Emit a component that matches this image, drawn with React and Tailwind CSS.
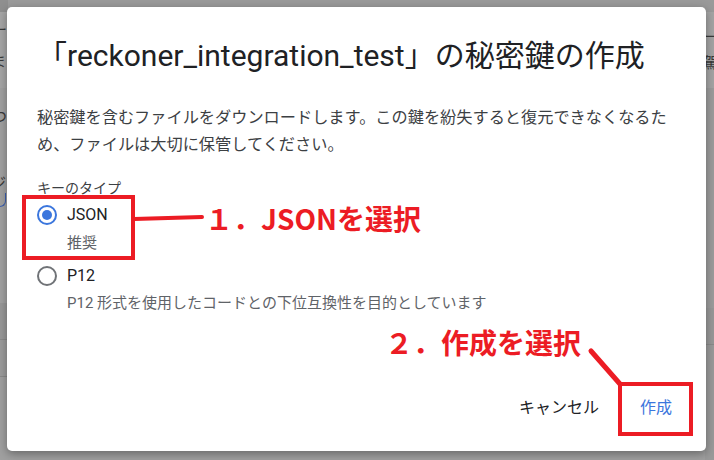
import React from 'react';

const font = "font-['Roboto','Noto_Sans_CJK_JP',sans-serif]";

function Radio({ checked }) {
  if (checked) {
    return (
      <span className="flex h-[20px] w-[20px] shrink-0 items-center justify-center rounded-full border-2 border-[#3b76dd]">
        <span className="h-[10px] w-[10px] rounded-full bg-[#3b76dd]" />
      </span>
    );
  }
  return <span className="h-[20px] w-[20px] shrink-0 rounded-full border-2 border-[#707377]" />;
}

export default function App() {
  return (
    <div className={`relative h-[460px] w-[714px] overflow-hidden bg-[#9e9e9e] ${font}`}>
      {/* dimmed page underneath */}
      <div className="flex h-full w-full">
        <div className="flex w-[8px] flex-col overflow-hidden text-[15px] leading-[20px] text-[#3a3a3a]">
          <div className="h-[12px] bg-[#8f8f8f]" />
          <div className="flex h-[76px] flex-col bg-[#a6a6a6] pt-[8px]">
            <span className="-ml-[8px]">ー</span>
            <span className="-ml-[9px] mt-[12px]">ま</span>
          </div>
          <div className="flex h-[215px] flex-col bg-[#a1a1a1] pt-[19px]">
            <span className="-ml-[8px]">つ</span>
            <span className="-ml-[9px] mt-[46px]">ジ</span>
            <div className="-ml-[8px] h-[14px] w-[14px] rounded-b-[6px] border-b border-r border-[#3b5fb0]" />
          </div>
          <div className="h-[36px] bg-[#989898]" />
          <div className="h-px bg-[#8a8a8a]" />
          <div className="h-[36px] bg-[#9c9c9c]" />
          <div className="h-px bg-[#8a8a8a]" />
          <div className="flex-1 bg-[#a0a0a0]" />
        </div>
        <div className="flex flex-1 flex-col">
          <div className="h-[7px] bg-[#9a9a9a]" />
          <div className="flex-1 bg-[#a0a0a0]" />
        </div>
        <div className="flex w-[9px] flex-col overflow-hidden text-[15px] leading-[20px] text-[#3a3a3a]">
          <div className="h-[12px] bg-[#9a9a9a]" />
          <div className="flex h-[76px] flex-col bg-[#a4a4a4] pt-[15px]">
            <span className="-ml-[2px]">ー</span>
            <span className="-ml-[2px] mt-[6px]">駕</span>
          </div>
          <div className="h-[220px] bg-[#9c9c9c]" />
          <div className="h-[36px] bg-[#989898]" />
          <div className="h-px bg-[#8a8a8a]" />
          <div className="flex-1 bg-[#9a9a9a]" />
        </div>
      </div>

      {/* dialog */}
      <div className="absolute left-[7px] top-[7px] flex h-[444px] w-[699px] flex-col rounded-[5px] bg-white pb-[25px] pl-[30px] pr-[18px] pt-[31px] shadow-[0_3px_10px_rgba(0,0,0,0.35)]">
        <h2 className="whitespace-nowrap text-[30px] font-normal leading-[36px] text-[#202124]">
          「reckoner_integration_test」の秘密鍵の作成
        </h2>
        <p className="mt-[30px] whitespace-nowrap text-[16.2px] leading-[27px] text-[#3c4043]">
          秘密鍵を含むファイルをダウンロードします。この鍵を紛失すると復元できなくなるた
          <br />
          め、ファイルは大切に保管してください。
        </p>
        <div className="mt-[20px] text-[14px] leading-[20px] text-[#3c4043]">キーのタイプ</div>

        <div className="mt-[7px] flex flex-col">
          <label className="flex items-center gap-[10px]">
            <Radio checked />
            <span className="text-[16px] leading-[20px] text-[#202124]">JSON</span>
          </label>
          <div className="ml-[30px] mt-[8px] text-[15px] leading-[20px] text-[#5f6368]">推奨</div>

          <label className="mt-[13px] flex items-center gap-[10px]">
            <Radio />
            <span className="text-[16px] leading-[20px] text-[#202124]">P12</span>
          </label>
          <div className="ml-[30px] mt-[7px] text-[15px] leading-[20px] text-[#5f6368]">
            P12 形式を使用したコードとの下位互換性を目的としています
          </div>
        </div>

        <div className="mt-auto flex items-center justify-end gap-[9px]">
          <button className="h-[36px] px-[16px] text-[16px] text-[#202124]">キャンセル</button>
          <button className="h-[36px] px-[16px] text-[16px] text-[#3b76dd]">作成</button>
        </div>
      </div>

      {/* annotations */}
      <div className="absolute left-[22px] top-[195px] h-[65px] w-[113px] border-4 border-[#ec1c24]" />
      <div className="absolute left-[618px] top-[382px] h-[54px] w-[75px] border-4 border-[#ec1c24]" />
      <svg className="pointer-events-none absolute left-0 top-0" width="714" height="460" viewBox="0 0 714 460">
        <line x1="134" y1="219" x2="202" y2="217" stroke="#ec1c24" strokeWidth="4" strokeLinecap="round" />
        <line x1="591" y1="351" x2="620" y2="384" stroke="#ec1c24" strokeWidth="5" strokeLinecap="round" />
      </svg>
      <div className="absolute left-[205px] top-[200px] whitespace-nowrap text-[28px] font-bold leading-[36px] text-[#ec1c24] font-['Noto_Sans_CJK_JP',sans-serif]">
        １．JSONを選択
      </div>
      <div className="absolute left-[385px] top-[324px] whitespace-nowrap text-[28px] font-bold leading-[36px] text-[#ec1c24] font-['Noto_Sans_CJK_JP',sans-serif]">
        ２．作成を選択
      </div>
    </div>
  );
}
